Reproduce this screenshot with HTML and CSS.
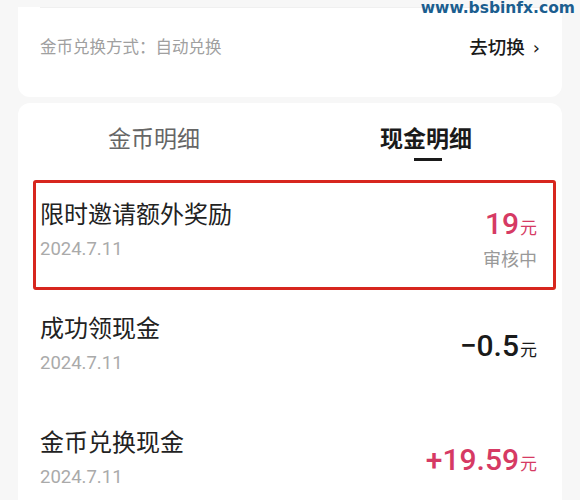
FILE: index.html
```html
<!DOCTYPE html>
<html lang="zh-CN">
<head>
    <meta charset="UTF-8">
    <title>现金明细</title>
    <link rel="stylesheet" href="styles.css">
</head>
<body>
<div class="watermark">www.bsbinfx.com</div>

<div class="card exchange">
    <div class="exchange-row">
        <span class="exchange-mode">金币兑换方式：自动兑换</span>
        <span class="exchange-switch">去切换 <span class="arrow">›</span></span>
    </div>
</div>

<div class="card detail">
    <div class="tabs">
        <div class="tab">金币明细</div>
        <div class="tab active">现金明细</div>
    </div>

    <div class="record highlight">
        <div class="record-info">
            <div class="record-title">限时邀请额外奖励</div>
            <div class="record-date">2024.7.11</div>
        </div>
        <div class="record-amount with-status">
            <div class="amount pink">19<span class="unit">元</span></div>
            <div class="status">审核中</div>
        </div>
    </div>

    <div class="record">
        <div class="record-info">
            <div class="record-title">成功领现金</div>
            <div class="record-date">2024.7.11</div>
        </div>
        <div class="record-amount">
            <div class="amount">−0.5<span class="unit">元</span></div>
        </div>
    </div>

    <div class="record">
        <div class="record-info">
            <div class="record-title">金币兑换现金</div>
            <div class="record-date">2024.7.11</div>
        </div>
        <div class="record-amount">
            <div class="amount pink">+19.59<span class="unit">元</span></div>
        </div>
    </div>
</div>
</body>
</html>
```

FILE: styles.css
```css
body {
    margin: 0;
    background-color: #f7f7f7;
    font-family: "Noto Sans CJK SC", "Noto Sans", sans-serif;
    color: #222;
    overflow: hidden;
}

.watermark {
    position: absolute;
    top: 0;
    right: 5px;
    font-family: "DejaVu Sans", sans-serif;
    font-weight: bold;
    font-size: 15.5px;
    line-height: 16px;
    color: #1b5e8f;
}

.card {
    background-color: #fff;
    margin: 0 18px;
    border-radius: 12px;
}

/* Exchange mode card */
.exchange {
    border-radius: 0 0 12px 12px;
    padding: 0 22px;
}

.exchange-row {
    display: flex;
    justify-content: space-between;
    align-items: center;
    border-top: 1px solid #f0f0f0;
    margin-top: 7px;
    padding: 25px 0 38px;
}

.exchange-mode {
    font-size: 16.5px;
    color: #a0a0a0;
}

.exchange-switch {
    font-size: 18.5px;
    color: #1a1a1a;
    font-weight: 500;
}

.exchange-switch .arrow {
    font-family: "DejaVu Sans", sans-serif;
    font-size: 18px;
    margin-left: 4px;
}

/* Detail card */
.detail {
    margin-top: 6px;
    padding: 18px 0 20px;
}

.tabs {
    display: flex;
    height: 59px;
}

.tab {
    flex: 1;
    text-align: center;
    font-size: 23px;
    line-height: 32px;
    color: #666;
    position: relative;
}

.tab.active {
    color: #1a1a1a;
    font-weight: bold;
}

.tab.active::after {
    content: "";
    position: absolute;
    left: 50%;
    top: 37px;
    width: 28px;
    height: 3px;
    margin-left: -12px;
    background-color: #1a1a1a;
}

.record {
    display: flex;
    justify-content: space-between;
    align-items: flex-start;
    height: 114px;
    margin: 0 6px 0 15px;
    padding: 14px 16px 0 4px;
    border: 3px solid transparent;
    box-sizing: border-box;
}

.record.highlight {
    height: 110px;
    border-color: #d7261e;
    border-radius: 3px;
    margin-bottom: 4px;
}

.record-title {
    font-size: 24px;
    color: #222;
    line-height: 32px;
}

.record-date {
    font-family: "Roboto", "Liberation Sans", sans-serif;
    font-size: 18.5px;
    line-height: 24px;
    color: #aaa;
    margin-top: 8px;
}

.record-amount {
    text-align: right;
    padding-top: 18px;
}

.record-amount.with-status {
    padding-top: 10px;
}

.amount {
    font-family: "Roboto", "Liberation Sans", sans-serif;
    font-size: 30px;
    font-weight: 500;
    color: #1a1a1a;
    line-height: 34px;
}

.amount.pink {
    color: #d63a64;
}

.amount .unit {
    font-family: "Noto Sans CJK SC", sans-serif;
    font-size: 17px;
    font-weight: normal;
    margin-left: 1px;
}

.status {
    font-size: 18px;
    line-height: 24px;
    color: #999;
    margin-top: 2px;
}
```
